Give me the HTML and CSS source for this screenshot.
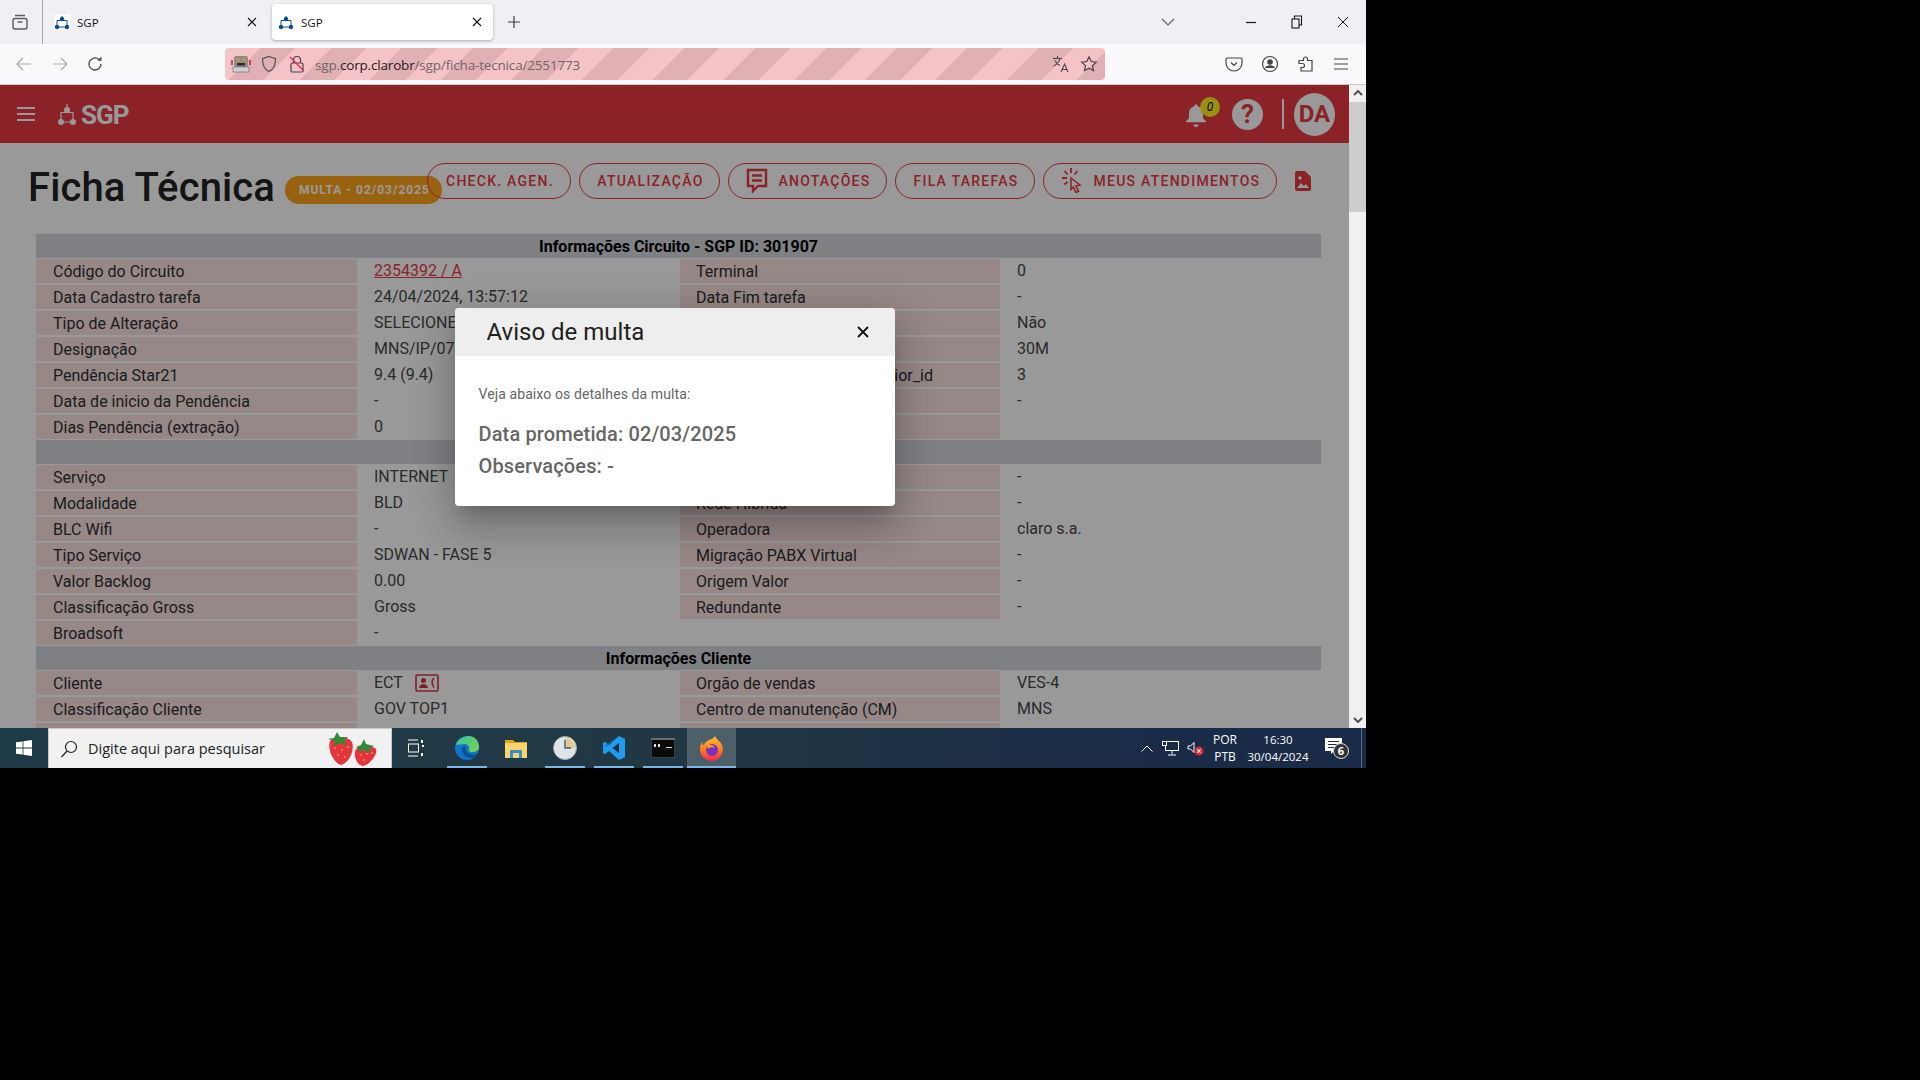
FILE: index.html
```html
<!DOCTYPE html>
<html lang="pt-BR">
<head>
    <meta charset="UTF-8">
    <title>SGP</title>
    <link rel="stylesheet" href="styles.css">
</head>
<body>
<div class="screen">
    <!-- abas do navegador -->
    <div class="tabbar">
        <div class="tab-list">
            <svg width="18" height="18" viewBox="0 0 18 18" fill="none" stroke="#5b5b66" stroke-width="1.4"><rect x="2" y="5.5" width="14" height="10.5" rx="2"/><path d="M4 2.5h10M6.5 9h5"/></svg>
        </div>
        <div class="tab">
            <svg class="favicon" viewBox="0 0 16 16"><rect width="16" height="16" fill="#fff"/><path d="M3 13V6.5h10V13M3 13h10M8 2v5" fill="none" stroke="#0f4c8a" stroke-width="1"/><circle cx="3" cy="13" r="2.2" fill="#0f4c8a"/><circle cx="13" cy="13" r="2.2" fill="#0f4c8a"/><circle cx="8" cy="5" r="2.2" fill="#0f4c8a"/></svg>
            <span class="tab-title">SGP</span>
            <svg class="tab-close" width="10" height="10" viewBox="0 0 10 10" stroke="#15141a" stroke-width="1.1"><path d="M1 1l8 8M9 1l-8 8"/></svg>
        </div>
        <div class="tab tab-active">
            <svg class="favicon" viewBox="0 0 16 16"><rect width="16" height="16" fill="#fff"/><path d="M3 13V6.5h10V13M3 13h10M8 2v5" fill="none" stroke="#0f4c8a" stroke-width="1"/><circle cx="3" cy="13" r="2.2" fill="#0f4c8a"/><circle cx="13" cy="13" r="2.2" fill="#0f4c8a"/><circle cx="8" cy="5" r="2.2" fill="#0f4c8a"/></svg>
            <span class="tab-title">SGP</span>
            <svg class="tab-close" width="10" height="10" viewBox="0 0 10 10" stroke="#15141a" stroke-width="1.1"><path d="M1 1l8 8M9 1l-8 8"/></svg>
        </div>
        <svg class="tab-new" width="14" height="14" viewBox="0 0 14 14" stroke="#3a3a44" stroke-width="1.2"><path d="M7 1v12M1 7h12"/></svg>
        <svg class="tab-more" width="14" height="8" viewBox="0 0 14 8" fill="none" stroke="#5b5b66" stroke-width="1.1"><path d="M1 1l6 6 6-6"/></svg>
        <div class="win-controls">
            <svg width="12" height="12" viewBox="0 0 12 12" stroke="#15141a"><path d="M1 6.5h10" stroke-width="1.2"/></svg>
            <svg width="12" height="14" viewBox="0 0 12 14" fill="none" stroke="#15141a" stroke-width="1.1"><rect x="1" y="4" width="7" height="9"/><path d="M3.5 4V1h7v9H8"/></svg>
            <svg width="12" height="12" viewBox="0 0 12 12" stroke="#15141a" stroke-width="1"><path d="M1 1l10 10M11 1L1 11"/></svg>
        </div>
    </div>

    <!-- barra de endereco -->
    <div class="navbar">
        <div class="nav-buttons">
            <svg width="20" height="16" viewBox="0 0 20 16" fill="none" stroke="#a9a9b0" stroke-width="1.2"><path d="M17 8H3M9 2L3 8l6 6"/></svg>
            <svg width="20" height="16" viewBox="0 0 20 16" fill="none" stroke="#a9a9b0" stroke-width="1.2"><path d="M3 8h14M11 2l6 6-6 6"/></svg>
            <svg width="18" height="18" viewBox="0 0 18 18" fill="none" stroke="#45454d" stroke-width="1.3"><path d="M15 9a6 6 0 1 1-2-4.5"/><path d="M15.5 1.5v4.2h-4.2" fill="#45454d" stroke="none"/></svg>
        </div>
        <div class="urlbar">
            <svg class="url-icon" width="20" height="18" viewBox="0 0 20 18"><rect x="3" y="1" width="14" height="11" rx="2" fill="#8d8d8d"/><rect x="2" y="12" width="16" height="5" fill="#cfcfcf" stroke="#666" stroke-width=".6"/><circle cx="7" cy="5" r="1.5" fill="#e8941a"/><circle cx="13" cy="5" r="1.5" fill="#e8941a"/><rect x="6" y="8" width="8" height="2.5" fill="#2b2b2b"/><path d="M1 5v5M19 5v5" stroke="#c4202c" stroke-width="1.5"/></svg>
            <svg class="url-icon url-shield" width="16" height="18" viewBox="0 0 16 18" fill="none" stroke="#4f4f57" stroke-width="1.2"><path d="M8 1.5l6.5 2.2c0 6-1.5 10.500-6.500 12.800C3 14.200 1.500 9.700 1.500 3.700z"/></svg>
            <svg class="url-icon url-lock" width="16" height="18" viewBox="0 0 16 18" fill="none"><rect x="2" y="8" width="12" height="9" rx="1.500" stroke="#45454d" stroke-width="1.200"/><path d="M4.500 8V5a3.500 3.500 0 0 1 7 0v3" stroke="#45454d" stroke-width="1.200"/><path d="M1 2l14 14" stroke="#e22850" stroke-width="1.200"/></svg>
            <span class="url-text">sgp.<b>corp.clarobr</b>/sgp/ficha-tecnica/2551773</span>
            <svg class="url-translate" width="18" height="18" viewBox="0 0 18 18" fill="none" stroke="#45454d" stroke-width="1.100"><path d="M1 3.500h9M5.500 1v2.500M8 3.500c-.8 3.500-3 6-6.500 7.500M3 5.500c1 2.500 2.500 4 5 5"/><path d="M9 17l3.500-8 3.500 8M10.200 14.500h4.600"/></svg>
            <svg class="url-star" width="18" height="18" viewBox="0 0 18 18" fill="none" stroke="#45454d" stroke-width="1.200"><path d="M9 1.800l2.200 4.700 5.100.6-3.800 3.500 1 5.100L9 13.200l-4.500 2.500 1-5.100L1.700 7.100l5.100-.6z"/></svg>
        </div>
        <div class="nav-tools">
            <svg width="18" height="18" viewBox="0 0 18 18" fill="none" stroke="#45454d" stroke-width="1.200"><path d="M2.500 3h13a1.500 1.500 0 0 1 1.500 1.500V8a8 8 0 0 1-16 0V4.500A1.500 1.500 0 0 1 2.500 3zM6 7.500l3 3 3-3"/></svg>
            <svg width="18" height="18" viewBox="0 0 18 18" fill="none" stroke="#45454d" stroke-width="1.200"><circle cx="9" cy="9" r="7.500"/><circle cx="9" cy="7" r="2.800" fill="#45454d" stroke="none"/><path d="M3.800 13c1-2 3-2.800 5.200-2.800s4.200.8 5.200 2.800z" fill="#45454d" stroke="none"/></svg>
            <svg width="18" height="18" viewBox="0 0 18 18" fill="none" stroke="#45454d" stroke-width="1.200"><path d="M2 5.500h4.500V4a2 2 0 0 1 4 0v1.500H15V16H4v-3.500h1.500a2 2 0 0 0 0-4H2z"/></svg>
            <svg width="16" height="14" viewBox="0 0 16 14" stroke="#45454d" stroke-width="1.200"><path d="M1 2h14M1 7h14M1 12h14"/></svg>
        </div>
    </div>

    <div class="viewport">
        <div class="page">
            <header class="appbar">
                <svg class="menu-icon" width="18" height="14" viewBox="0 0 18 14" fill="#fff"><rect y="0" width="18" height="2"/><rect y="6" width="18" height="2"/><rect y="12" width="18" height="2"/></svg>
                <div class="logo">
                    <svg width="18" height="23" viewBox="0 0 18 23"><path d="M3 19V9.500h12V19M3 19h12M9 1v7" fill="none" stroke="#fff" stroke-width="1.200"/><circle cx="3" cy="19" r="3" fill="#fff"/><circle cx="15" cy="19" r="3" fill="#fff"/><circle cx="9" cy="7" r="3" fill="#fff"/></svg>
                    <span>SGP</span>
                </div>
                <div class="appbar-right">
                    <div class="bell">
                        <svg width="22" height="24" viewBox="0 0 22 24" fill="#fff"><path d="M11 1.500c1 0 1.600.7 1.700 1.700 3.400.8 5.300 3.500 5.300 7v5l3 3v1H1v-1l3-3v-5c0-3.500 1.900-6.200 5.300-7 .1-1 .700-1.700 1.700-1.700z"/><path d="M8.500 21.500h5a2.500 2.500 0 0 1-5 0z"/></svg>
                        <span class="bell-count">0</span>
                    </div>
                    <div class="help">?</div>
                    <div class="divider"></div>
                    <div class="avatar">DA</div>
                </div>
            </header>

            <main class="content">
                <div class="title-row">
                    <h1>Ficha Técnica</h1>
                    <span class="multa-badge">MULTA - 02/03/2025</span>
                    <div class="actions">
                        <button class="pill pill-check">CHECK. AGEN.</button>
                        <button class="pill pill-update">ATUALIZAÇÃO</button>
                        <button class="pill pill-notes">
                            <svg width="22" height="26" viewBox="0 0 22 26" fill="none" stroke="#e83a44" stroke-width="2.400"><path d="M2 2h18v16h-8l-5 5v-5H2z"/><path d="M6 7.500h10M6 12.500h10"/></svg>
                            ANOTAÇÕES
                        </button>
                        <button class="pill pill-queue">FILA TAREFAS</button>
                        <button class="pill pill-meus">
                            <svg width="20" height="28" viewBox="0 0 20 28" fill="none" stroke="#e83a44" stroke-width="1.800"><path d="M9 1v5M2.500 4l3 3.500M15.500 4l-3 3.500M0 11h5M2.500 17.500l3-2.500"/><path d="M9 11l9 7-4 .8 2.500 5.500-2.500 1.200-2.500-5.500-2.500 2.500z" stroke-width="1.500"/></svg>
                            MEUS ATENDIMENTOS
                        </button>
                        <svg class="pdf-icon" width="16" height="20" viewBox="0 0 16 20"><path d="M0 2a2 2 0 0 1 2-2h8l6 6v12a2 2 0 0 1-2 2H2a2 2 0 0 1-2-2z" fill="#e83a44"/><circle cx="5" cy="7" r="1.800" fill="#fff"/><path d="M2 17l4-5 3 3 2-2 3 4z" fill="#fff"/></svg>
                    </div>
                </div>

                <section class="ficha">
                    <h2 class="ficha-title">Informações Circuito - SGP ID: 301907</h2>
                    <div class="ficha-grid">
                        <div class="lbl">Código do Circuito</div><div class="val"><a href="#">2354392 / A</a></div><div class="lbl">Terminal</div><div class="val">0</div>
                        <div class="lbl">Data Cadastro tarefa</div><div class="val">24/04/2024, 13:57:12</div><div class="lbl">Data Fim tarefa</div><div class="val">-</div>
                        <div class="lbl">Tipo de Alteração</div><div class="val">SELECIONE</div><div class="lbl">Reprovado</div><div class="val">Não</div>
                        <div class="lbl">Designação</div><div class="val">MNS/IP/07</div><div class="lbl">Velocidade</div><div class="val">30M</div>
                        <div class="lbl">Pendência Star21</div><div class="val">9.4 (9.4)</div><div class="lbl">Identificador circuitos superior_id</div><div class="val">3</div>
                        <div class="lbl">Data de inicio da Pendência</div><div class="val">-</div><div class="lbl">Origem</div><div class="val">-</div>
                        <div class="lbl">Dias Pendência (extração)</div><div class="val">0</div><div class="lbl"></div><div class="val"></div>
                    </div>
                </section>

                <section class="ficha">
                    <h2 class="ficha-title">Informações Serviço</h2>
                    <div class="ficha-grid">
                        <div class="lbl">Serviço</div><div class="val">INTERNET</div><div class="lbl">Produto</div><div class="val">-</div>
                        <div class="lbl">Modalidade</div><div class="val">BLD</div><div class="lbl">Rede Híbrida</div><div class="val">-</div>
                        <div class="lbl">BLC Wifi</div><div class="val">-</div><div class="lbl">Operadora</div><div class="val">claro s.a.</div>
                        <div class="lbl">Tipo Serviço</div><div class="val">SDWAN - FASE 5</div><div class="lbl">Migração PABX Virtual</div><div class="val">-</div>
                        <div class="lbl">Valor Backlog</div><div class="val">0.00</div><div class="lbl">Origem Valor</div><div class="val">-</div>
                        <div class="lbl">Classificação Gross</div><div class="val">Gross</div><div class="lbl">Redundante</div><div class="val">-</div>
                        <div class="lbl">Broadsoft</div><div class="val">-</div><div></div><div></div>
                    </div>
                </section>

                <section class="ficha">
                    <h2 class="ficha-title">Informações Cliente</h2>
                    <div class="ficha-grid">
                        <div class="lbl">Cliente</div>
                        <div class="val">ECT
                            <svg class="contact-icon" width="24" height="18" viewBox="0 0 24 18" fill="none" stroke="#d93540" stroke-width="1.600"><rect x="1" y="1" width="22" height="16" rx="1"/><circle cx="8.500" cy="6.500" r="2.500" fill="#d93540" stroke="none"/><path d="M4 14c.5-3 2.500-4 4.500-4s4 1 4.500 4z" fill="#d93540" stroke="none"/><path d="M19 4c-2.500 2.500-2.500 6 0 9.500"/></svg>
                        </div>
                        <div class="lbl">Orgão de vendas</div><div class="val">VES-4</div>
                        <div class="lbl">Classificação Cliente</div><div class="val">GOV TOP1</div><div class="lbl">Centro de manutenção (CM)</div><div class="val">MNS</div>
                        <div class="lbl"></div><div class="val"></div><div class="lbl"></div><div class="val"></div>
                    </div>
                </section>
            </main>

            <!-- fundo escuro e dialogo -->
            <div class="backdrop">
                <div class="dialog">
                    <div class="dialog-head">
                        <h3>Aviso de multa</h3>
                        <svg class="dialog-close" width="12" height="12" viewBox="0 0 12 12" stroke="#111" stroke-width="1.800"><path d="M1 1l10 10M11 1L1 11"/></svg>
                    </div>
                    <div class="dialog-body">
                        <p class="dialog-intro">Veja abaixo os detalhes da multa:</p>
                        <p class="dialog-info">Data prometida: 02/03/2025</p>
                        <p class="dialog-info">Observações: -</p>
                    </div>
                </div>
            </div>
        </div>

        <div class="scrollbar">
            <svg class="scroll-arrow" width="10" height="6" viewBox="0 0 10 6" fill="none" stroke="#505050" stroke-width="2"><path d="M1 5l4-4 4 4"/></svg>
            <div class="scroll-thumb"></div>
            <svg class="scroll-arrow scroll-down" width="10" height="6" viewBox="0 0 10 6" fill="none" stroke="#505050" stroke-width="2"><path d="M1 1l4 4 4-4"/></svg>
        </div>
    </div>

    <!-- barra de tarefas -->
    <footer class="taskbar">
        <div class="start">
            <svg width="16" height="16" viewBox="0 0 16 16" fill="#fff"><path d="M0 2.300l6.600-.9v6.200H0zM7.400 1.300L16 0v7.600H7.400zM0 8.400h6.600v6.200L0 13.700zM7.400 8.400H16V16l-8.600-1.200z"/></svg>
        </div>
        <div class="search">
            <svg width="18" height="18" viewBox="0 0 18 18" fill="none" stroke="#222" stroke-width="1.200"><circle cx="11" cy="7" r="5.500"/><path d="M7 11l-5.500 6"/></svg>
            <span>Digite aqui para pesquisar</span>
            <svg class="berries" width="50" height="34" viewBox="0 0 50 34">
                <path d="M2 9c6-5 18-5 22 1 3 8-3 21-11 23C6 31-1 18 2 9z" fill="#e5343c"/>
                <path d="M28 17c5-4 16-4 20 0 2 6-7 16-13 17-7-1-10-11-7-17z" fill="#e5343c"/>
                <path d="M0 7l6-1 3-6 3 5 8 0-4 4 3 5-7-3-6 3 1-5z" fill="#2f8a3a"/>
                <path d="M28 15l5-2 3-6 2 5 8 2-5 3 1 4-6-3-5 2 0-3z" fill="#2f8a3a"/>
                <g fill="#f6d36b"><circle cx="7" cy="16" r=".8"/><circle cx="14" cy="18" r=".8"/><circle cx="20" cy="15" r=".8"/><circle cx="10" cy="23" r=".8"/><circle cx="17" cy="25" r=".8"/><circle cx="33" cy="23" r=".8"/><circle cx="39" cy="22" r=".8"/><circle cx="44" cy="21" r=".8"/><circle cx="36" cy="28" r=".8"/></g>
            </svg>
        </div>
        <div class="task-view">
            <svg width="16" height="18" viewBox="0 0 16 18" fill="none" stroke="#fff"><path d="M0 1h10M0 17h10"/><rect x=".5" y="5" width="10" height="8"/><path d="M14 1v3M14 7h2M14 14v3" stroke-width="2"/></svg>
        </div>
        <div class="task open">
            <svg width="24" height="24" viewBox="0 0 24 24"><defs><linearGradient id="edgeA" x1="0" y1="0" x2="1" y2="1"><stop offset="0" stop-color="#35c1a8"/><stop offset="1" stop-color="#7bd648"/></linearGradient></defs><circle cx="12" cy="12" r="12" fill="#0f77c8"/><path d="M1 9C3 2 10 0 14 0c6 0 10 5 10 11 0 4-4 5-7 5-2 0-4-1-3-3 1-3-2-5-5-5-3 0-6 1-8 1z" fill="url(#edgeA)"/><path d="M7 13c0 5 4 9 9 9 3 0 6-2 7-5-2 2-5 2-8 1-4-1-5-5-4-8-2 0-4 1-4 3z" fill="#0b4f96"/></svg>
        </div>
        <div class="task">
            <svg width="22" height="20" viewBox="0 0 22 20"><path d="M0 2h8l2 2h12v3H0z" fill="#e3a21a"/><rect y="5" width="22" height="15" fill="#f9d66c"/><rect x="5" y="12" width="12" height="8" fill="#3f8cc9"/><rect x="8" y="15" width="6" height="5" fill="#f9d66c"/></svg>
        </div>
        <div class="task open">
            <svg width="24" height="24" viewBox="0 0 24 24"><circle cx="12" cy="12" r="11.500" fill="#dfe4e8" stroke="#9aa3ab"/><path d="M12 2a10 10 0 0 1 10 10H12z" fill="#e3c98a"/><path d="M12 4v8h6" fill="none" stroke="#3b5f7d" stroke-width="1.400"/></svg>
        </div>
        <div class="task open">
            <svg width="22" height="24" viewBox="0 0 22 24"><path d="M16 0l6 3v18l-6 3-10-9-4 3-2-1V7l2-1 4 3z" fill="#1f9cf0"/><path d="M16 7v10l-6.500-5z" fill="#222f3a"/><path d="M16 0L3 11l-1-1 14-10z" fill="#0b6fb8"/></svg>
        </div>
        <div class="task open">
            <svg width="24" height="20" viewBox="0 0 24 20"><rect width="24" height="20" fill="#0b0b0b" stroke="#888" stroke-width=".800"/><rect width="24" height="2" fill="#6d6d6d"/><path d="M3 6h2v3H3zM7 6h2v3H7zM15 9h6v1h-6z" fill="#ddd"/></svg>
        </div>
        <div class="task open active">
            <svg width="24" height="25" viewBox="0 0 24 25"><defs><linearGradient id="foxA" x1="0" y1="0" x2="0" y2="1"><stop offset="0" stop-color="#ffc22e"/><stop offset=".55" stop-color="#ff7a21"/><stop offset="1" stop-color="#f0294e"/></linearGradient></defs><path d="M15 0c1 3 5 5 7 9 3 7-2 16-10 16C5 25 0 20 0 13c0-3 1-5 2-7 0 2 1 3 2 3 1-3 3-4 5-5 3-1 5-2 6-4z" fill="url(#foxA)"/><circle cx="12" cy="14" r="6" fill="#7b2fc0"/><path d="M7 9c3-1 7 0 8 3-2-1-5-1-7 1z" fill="#ff9a26"/></svg>
        </div>

        <div class="tray">
            <svg class="tray-up" width="12" height="7" viewBox="0 0 12 7" fill="none" stroke="#fff"><path d="M.5 6.500L6 1l5.500 5.500"/></svg>
            <svg class="tray-net" width="17" height="15" viewBox="0 0 17 15" fill="none" stroke="#fff"><rect x="3.500" y=".5" width="13" height="9"/><path d="M10 10v3.500M6 14h8"/><rect x=".5" y=".5" width="4" height="4" fill="#1a2b47"/></svg>
            <svg class="tray-sound" width="17" height="15" viewBox="0 0 17 15"><path d="M1 5h2.500L7 1.500v10L3.500 8H1z" fill="none" stroke="#fff"/><circle cx="12" cy="10" r="4.500" fill="#d8252f"/><path d="M10.200 8.200l3.600 3.600M13.800 8.200l-3.600 3.600" stroke="#fff" stroke-width="1.200"/></svg>
            <div class="tray-lang"><span>POR</span><span>PTB</span></div>
            <div class="tray-clock"><span>16:30</span><span>30/04/2024</span></div>
            <div class="tray-notif">
                <svg width="17" height="17" viewBox="0 0 17 17"><path d="M0 0h17v13H9l-3 3v-3H0z" fill="#fff"/><path d="M3 3.500h11M3 6.500h11M3 9.500h11" stroke="#1a2b47"/></svg>
                <span class="notif-count">6</span>
            </div>
            <div class="show-desktop"></div>
        </div>
    </footer>
</div>
</body>
</html>
```

FILE: styles.css
```css
* {
    box-sizing: border-box;
}
html, body {
    margin: 0;
    height: 100%;
    background: #000;
}
body {
    font-family: Roboto, "Liberation Sans", sans-serif;
    overflow: hidden;
}
.screen {
    width: 1366px;
    height: 768px;
    display: flex;
    flex-direction: column;
    overflow: hidden;
}

/* navegador */
.tabbar {
    height: 44px;
    background: #f0f0f4;
    display: flex;
    align-items: center;
    flex: none;
}
.tab-list {
    width: 43px;
    height: 44px;
    padding-right: 2px;
    border-right: 1px solid #a8a8ad;
    display: flex;
    align-items: center;
    justify-content: center;
}
.tab {
    width: 225px;
    height: 36px;
    padding: 0 11px;
    display: flex;
    align-items: center;
    font-family: "Open Sans", sans-serif;
    font-size: 11.5px;
    color: #15141a;
}
.tab-active {
    width: 221px;
    margin-left: 4px;
    padding: 0 11px 0 6px;
    background: #fff;
    border-radius: 4px;
    box-shadow: 0 1px 3px rgba(0,0,0,.3);
}
.favicon {
    width: 16px;
    height: 16px;
    flex: none;
}
.tab-title {
    margin-left: 7px;
    flex: 1;
}
.tab-new {
    margin-left: 14px;
}
.tab-more {
    margin-left: auto;
    margin-right: 70px;
}
.win-controls {
    display: flex;
    align-items: center;
    gap: 34px;
    margin-right: 17px;
}

.navbar {
    height: 41px;
    flex: none;
    background: #f9f9fb;
    border-bottom: 1px solid #c8c8cc;
    display: flex;
    align-items: center;
    padding-bottom: 1px;
}
.nav-buttons {
    width: 225px;
    padding-left: 14px;
    display: flex;
    align-items: center;
    gap: 16px;
}
.urlbar {
    width: 880px;
    height: 32px;
    border-radius: 4px;
    background: repeating-linear-gradient(135deg, #f5c2c5 0 25px, #e0b0b4 25px 50px);
    display: flex;
    align-items: center;
    padding: 0 7px 0 6px;
}
.url-icon {
    flex: none;
}
.url-shield {
    margin-left: 10px;
}
.url-lock {
    margin-left: 12px;
}
.url-text {
    margin-left: 10px;
    padding-top: 2px;
    font-family: "Open Sans", sans-serif;
    font-size: 13.5px;
    color: #6f666a;
    letter-spacing: -.17px;
}
.url-text b {
    font-weight: 400;
    color: #1d1b22;
}
.url-translate {
    margin-left: auto;
}
.url-star {
    margin-left: 10px;
}
.nav-tools {
    flex: 1;
    display: flex;
    align-items: center;
    padding-left: 120px;
    gap: 18px;
}

/* area da pagina */
.viewport {
    height: 643px;
    flex: none;
    display: flex;
}
.page {
    position: relative;
    width: 1349px;
    background: #fff;
    overflow: hidden;
}
.scrollbar {
    width: 17px;
    background: #f0f0f0;
    display: flex;
    flex-direction: column;
    align-items: center;
    padding-top: 5px;
}
.scroll-thumb {
    width: 17px;
    height: 110px;
    margin-top: 6px;
    background: #cdcdcd;
}
.scroll-down {
    margin-top: auto;
    margin-bottom: 5px;
}

.appbar {
    height: 58px;
    background: #e83a44;
    display: flex;
    align-items: center;
    padding: 0 14px 0 17px;
}
.logo {
    margin-left: 23px;
    display: flex;
    align-items: center;
    gap: 5px;
    color: #fff;
    font-size: 26px;
    font-weight: 700;
    letter-spacing: -1px;
}
.logo span {
    padding-top: 2px;
}
.appbar-right {
    margin-left: auto;
    display: flex;
    align-items: center;
}
.bell {
    position: relative;
    width: 22px;
    height: 24px;
    margin-top: 2px;
}
.bell-count {
    position: absolute;
    top: -6px;
    right: -13px;
    width: 20px;
    height: 20px;
    border-radius: 50%;
    background: #fff019;
    color: #000;
    font-size: 12px;
    font-style: italic;
    line-height: 20px;
    text-align: center;
}
.help {
    width: 31px;
    height: 31px;
    margin-left: 25px;
    border-radius: 50%;
    background: #fff;
    color: #e83a44;
    font-size: 26px;
    font-weight: 700;
    line-height: 31px;
    text-align: center;
}
.divider {
    width: 2px;
    height: 30px;
    margin-left: 19px;
    background: #fff;
}
.avatar {
    width: 41px;
    height: 43px;
    margin-left: 10px;
    border-radius: 50%;
    background: #fff;
    color: #e83a44;
    font-size: 24px;
    font-weight: 700;
    line-height: 43px;
    text-align: center;
}

.content {
    padding: 20px 0 0 36px;
}
.title-row {
    display: flex;
    height: 71px;
    margin-left: -8px;
    align-items: flex-start;
}
h1 {
    margin: 1px 0 0;
    font-size: 40px;
    font-weight: 500;
    line-height: 48px;
    letter-spacing: .1px;
    color: #222;
}
.multa-badge {
    margin: 13px 0 0 10px;
    width: 157px;
    height: 28px;
    padding-left: 2px;
    flex: none;
    border-radius: 14px;
    background: #ffa31a;
    color: #fff;
    font-size: 12px;
    font-weight: 700;
    letter-spacing: 1px;
    line-height: 28px;
    text-align: center;
    white-space: nowrap;
}
.actions {
    position: relative;
    margin-left: -15px;
    display: flex;
    align-items: center;
    gap: 8px;
}
.pill {
    height: 36px;
    padding: 0 0 0 2px;
    display: flex;
    align-items: center;
    justify-content: center;
    border: 1px solid #e83a44;
    border-radius: 18px;
    background: transparent;
    color: #e83a44;
    font-family: Roboto, sans-serif;
    font-size: 14px;
    font-weight: 500;
    letter-spacing: 1.25px;
    white-space: nowrap;
}
.pill-check { width: 144px; }
.pill-update { width: 141px; }
.pill-notes { width: 159px; gap: 10px; }
.pill-queue { width: 140px; }
.pill-meus { width: 234px; gap: 12px; }
.pdf-icon {
    margin-left: 10px;
}

.ficha {
    width: 1285px;
    margin-bottom: 1px;
}
.ficha-title {
    margin: 0 0 1px;
    height: 24px;
    background: #d5d7de;
    color: #000;
    font-size: 16px;
    font-weight: 700;
    line-height: 26px;
    text-align: center;
}
.ficha-grid {
    display: grid;
    grid-template-columns: 321px 323px 320px 321px;
    grid-auto-rows: 24px;
    row-gap: 2px;
}
.lbl {
    padding-left: 17px;
    background: #fae3df;
    color: #303030;
    font-size: 16px;
    line-height: 25px;
    white-space: nowrap;
    overflow: hidden;
}
.val {
    padding-left: 17px;
    color: #484848;
    font-size: 16px;
    line-height: 23px;
    white-space: nowrap;
}
.ficha-grid > :nth-child(4n+3) {
    padding-left: 16px;
}
.val a {
    color: #e83a44;
}
.contact-icon {
    margin-left: 9px;
    vertical-align: -4px;
}

/* dialogo */
.backdrop {
    position: absolute;
    inset: 0;
    background: rgba(0,0,0,.4);
    display: flex;
    align-items: center;
    justify-content: center;
}
.dialog {
    width: 440px;
    height: 198px;
    border-radius: 4px;
    background: #fff;
    overflow: hidden;
    box-shadow: 0 11px 15px -7px rgba(0,0,0,.2), 0 24px 38px 3px rgba(0,0,0,.14), 0 9px 46px 8px rgba(0,0,0,.12);
}
.dialog-head {
    height: 48px;
    padding: 0 26px 0 32px;
    background: #eee;
    display: flex;
    align-items: center;
    justify-content: space-between;
}
.dialog-head h3 {
    margin: 0;
    font-size: 24px;
    font-weight: 400;
    color: #212121;
}
.dialog-body {
    padding: 28px 24px 0;
    color: #666;
}
.dialog-intro {
    margin: 0 0 18px;
    font-size: 14px;
    line-height: 20px;
    letter-spacing: .1px;
}
.dialog-info {
    margin: 0 0 8px;
    font-size: 20px;
    font-weight: 500;
    line-height: 24px;
    letter-spacing: .13px;
}

/* barra de tarefas */
.taskbar {
    height: 40px;
    flex: none;
    display: flex;
    align-items: center;
    background: linear-gradient(90deg, #1f3a47 0, #213844 50%, #1a2b47 85%);
    font-family: "Open Sans", sans-serif;
}
.start {
    width: 48px;
    display: flex;
    justify-content: center;
}
.search {
    width: 344px;
    height: 40px;
    padding-left: 11px;
    display: flex;
    align-items: center;
    background: #f1f1f1;
    border: 1px solid #c8c8c8;
    border-bottom: 0;
    font-size: 14.5px;
    color: #222;
}
.search span {
    margin-left: 10px;
}
.berries {
    margin-left: auto;
    margin-right: 13px;
}
.task-view {
    width: 50px;
    padding-left: 16px;
    display: flex;
}
.task {
    width: 49px;
    height: 40px;
    display: flex;
    align-items: center;
    justify-content: center;
}
.task.open {
    background: linear-gradient(#76b9ed, #76b9ed) center bottom / 40px 2px no-repeat;
}
.task.active {
    background: linear-gradient(#76b9ed, #76b9ed) center bottom / 100% 2px no-repeat, rgba(255,255,255,.2);
}
.tray {
    margin-left: auto;
    display: flex;
    align-items: center;
    color: #fff;
    font-size: 12px;
    height: 40px;
}
.tray-net {
    margin-left: 9px;
}
.tray-sound {
    margin-left: 8px;
}
.tray-lang, .tray-clock {
    display: flex;
    flex-direction: column;
    align-items: center;
    line-height: 17px;
}
.tray-lang {
    width: 36px;
    margin-left: 3px;
}
.tray-clock {
    width: 62px;
    margin-left: 4px;
    font-size: 11.5px;
}
.tray-notif {
    position: relative;
    margin-left: 16px;
    width: 20px;
    height: 20px;
}
.notif-count {
    position: absolute;
    top: 5px;
    left: 8px;
    width: 16px;
    height: 16px;
    border-radius: 50%;
    background: #333;
    border: 1px solid #ddd;
    font-size: 11px;
    font-weight: 700;
    line-height: 14px;
    text-align: center;
}
.show-desktop {
    width: 5px;
    height: 40px;
    margin-left: 16px;
    border-left: 1px solid #5a6a80;
}
```
